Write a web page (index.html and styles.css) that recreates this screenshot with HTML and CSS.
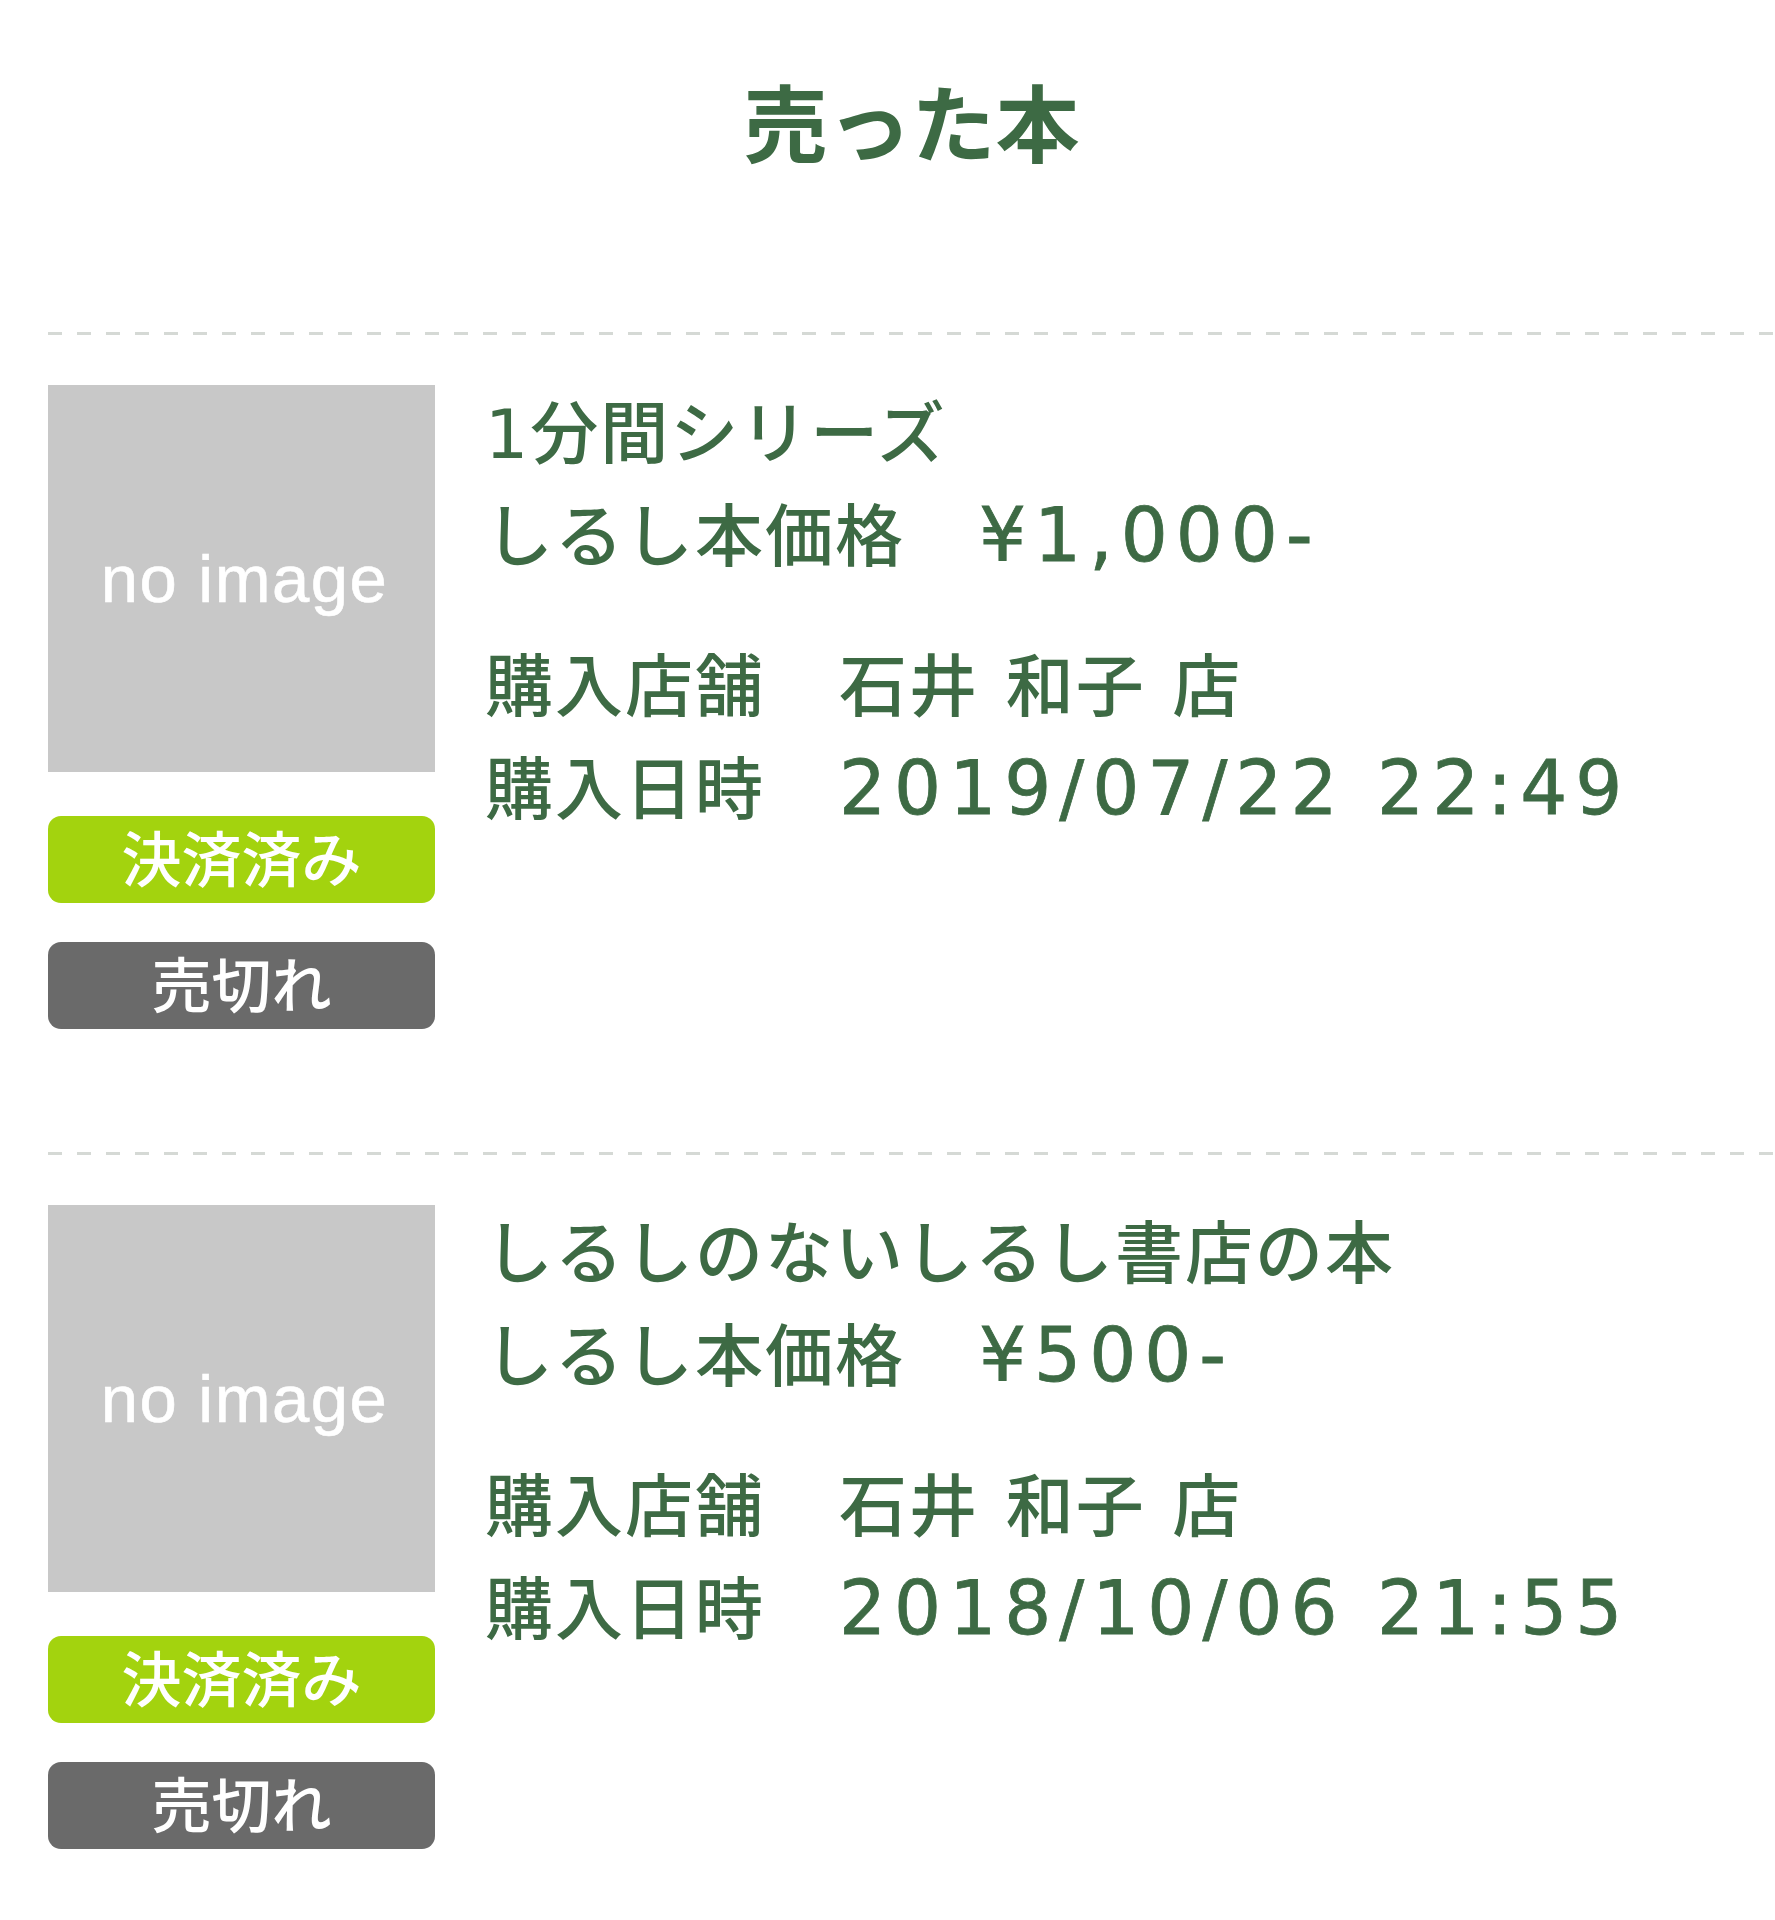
FILE: index.html
```html
<!DOCTYPE html>
<html lang="ja">
<head>
<meta charset="utf-8">
<title>売った本</title>
<link rel="stylesheet" href="styles.css">
</head>
<body>
<div class="page">
  <h1 class="title">売った本</h1>
  <ul class="list">
    <li class="item">
      <div class="side">
        <div class="thumb">no image</div>
        <div class="badge paid">決済済み</div>
        <div class="badge sold">売切れ</div>
      </div>
      <div class="info">
        <p class="line">1分間シリーズ</p>
        <p class="line">しるし本価格　<span class="num">¥1,000-</span></p>
        <p class="line gap">購入店舗　<span class="shop">石井 和子 店</span></p>
        <p class="line">購入日時　<span class="num">2019/07/22 22:49</span></p>
      </div>
    </li>
    <li class="item">
      <div class="side">
        <div class="thumb">no image</div>
        <div class="badge paid">決済済み</div>
        <div class="badge sold">売切れ</div>
      </div>
      <div class="info">
        <p class="line">しるしのないしるし書店の本</p>
        <p class="line">しるし本価格　<span class="num">¥500-</span></p>
        <p class="line gap">購入店舗　<span class="shop">石井 和子 店</span></p>
        <p class="line">購入日時　<span class="num">2018/10/06 21:55</span></p>
      </div>
    </li>
  </ul>
</div>
</body>
</html>
```

FILE: styles.css
```css
html, body {
  margin: 0;
  padding: 0;
  background: #ffffff;
}

body {
  font-family: "DejaVu Sans", "Noto Sans CJK JP", sans-serif;
  color: #3d6a44;
}

.page {
  padding-left: 48px;
}

.title {
  margin: 0;
  padding: 71px 0 163px;
  font-size: 84px;
  line-height: 98px;
  font-weight: 700;
  text-align: center;
  font-family: "Noto Sans CJK JP", sans-serif;
}

.list {
  list-style: none;
  margin: 0;
  padding: 0;
}

.item {
  display: flex;
  gap: 50px;
  padding: 53px 0 123px;
  background-image: repeating-linear-gradient(to right, #d5d9d5 0 14px, transparent 14px 29px);
  background-size: 100% 3px;
  background-repeat: no-repeat;
  background-position: 0 0;
}

.side {
  width: 387px;
  flex: none;
  display: flex;
  flex-direction: column;
}

.thumb {
  height: 387px;
  background: #c8c8c8;
  color: #ffffff;
  display: flex;
  align-items: center;
  justify-content: center;
  padding-left: 6px;
  font-family: "Liberation Sans", Arial, sans-serif;
  font-size: 67px;
  letter-spacing: 1.5px;
  -webkit-text-stroke: 0.6px #ffffff;
}

.badge {
  height: 87px;
  border-radius: 13px;
  color: #ffffff;
  text-align: center;
  font-family: "Noto Sans CJK JP", sans-serif;
  font-size: 60px;
  line-height: 80px;
  font-weight: 500;
}

.paid {
  margin-top: 44px;
  background: #a3d30e;
}

.sold {
  margin-top: 39px;
  background: #6a6a6a;
}

.info {
  flex: 1;
  font-size: 68px;
  line-height: 100px;
  font-weight: 500;
  letter-spacing: 2px;
}

.line {
  margin: 0;
  white-space: nowrap;
}

.gap {
  margin-top: 50px;
}

.shop {
  margin-left: 4px;
  word-spacing: 3px;
}

.num {
  font-family: "DejaVu Sans", sans-serif;
  font-size: 74px;
  font-weight: 400;
  letter-spacing: 8px;
  margin-left: 4px;
  -webkit-text-stroke: 0.8px #3d6a44;
}
```
